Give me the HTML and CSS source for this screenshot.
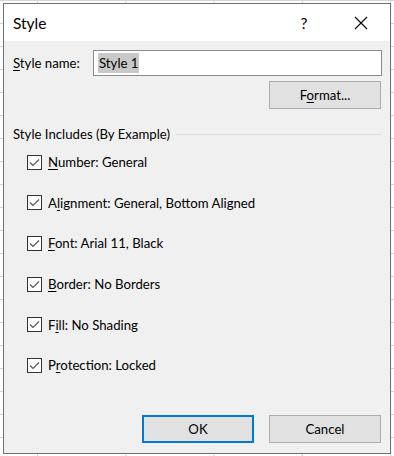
FILE: index.html
```html
<!DOCTYPE html>
<html>
<head>
<meta charset="utf-8">
<link rel="stylesheet" href="styles.css">
</head>
<body>
<div class="dialog">
  <div class="titlebar">
    <span class="title">Style</span>
    <span class="help">?</span>
    <span class="close">
      <svg width="14" height="14" viewBox="0 0 14 14"><path d="M1 1 L13 13 M13 1 L1 13" stroke="#000" stroke-width="1.1" fill="none"/></svg>
    </span>
  </div>
  <div class="body">
    <div class="name-row">
      <label class="label"><u>S</u>tyle name:</label>
      <div class="input"><span class="sel">Style 1</span></div>
    </div>
    <div class="format-row">
      <button class="btn">F<u>o</u>rmat...</button>
    </div>
    <div class="group-head">
      <span>Style Includes (By Example)</span>
      <span class="line"></span>
    </div>
    <div class="checks">
      <div class="check"><span class="box"><svg width="13" height="13" viewBox="0 0 13 13"><path d="M2 6.5 L5 9.5 L11 3.5" stroke="#555" stroke-width="1.2" fill="none"/></svg></span><span><u>N</u>umber: General</span></div>
      <div class="check"><span class="box"><svg width="13" height="13" viewBox="0 0 13 13"><path d="M2 6.5 L5 9.5 L11 3.5" stroke="#555" stroke-width="1.2" fill="none"/></svg></span><span>A<u>l</u>ignment: General, Bottom Aligned</span></div>
      <div class="check"><span class="box"><svg width="13" height="13" viewBox="0 0 13 13"><path d="M2 6.5 L5 9.5 L11 3.5" stroke="#555" stroke-width="1.2" fill="none"/></svg></span><span><u>F</u>ont: Arial 11, Black</span></div>
      <div class="check"><span class="box"><svg width="13" height="13" viewBox="0 0 13 13"><path d="M2 6.5 L5 9.5 L11 3.5" stroke="#555" stroke-width="1.2" fill="none"/></svg></span><span><u>B</u>order: No Borders</span></div>
      <div class="check"><span class="box"><svg width="13" height="13" viewBox="0 0 13 13"><path d="M2 6.5 L5 9.5 L11 3.5" stroke="#555" stroke-width="1.2" fill="none"/></svg></span><span>F<u>i</u>ll: No Shading</span></div>
      <div class="check"><span class="box"><svg width="13" height="13" viewBox="0 0 13 13"><path d="M2 6.5 L5 9.5 L11 3.5" stroke="#555" stroke-width="1.2" fill="none"/></svg></span><span>P<u>r</u>otection: Locked</span></div>
    </div>
    <div class="buttons">
      <button class="btn ok">OK</button>
      <button class="btn">Cancel</button>
    </div>
  </div>
</div>
</body>
</html>
```
FILE: styles.css
```css
html, body {
  margin: 0;
  padding: 0;
}
body {
  width: 394px;
  height: 456px;
  overflow: hidden;
  background-color: #fff;
  background-image:
    linear-gradient(to right, #d4d4d4 1px, transparent 1px),
    linear-gradient(to bottom, #d4d4d4 1px, transparent 1px);
  background-size: 88.3px 23px;
  background-position: 37px 0, 0 0;
  font-family: "Lato", "Noto Sans", sans-serif;
  font-size: 13.2px;
  color: #000;
  padding: 3px 0 0 3px;
  box-sizing: border-box;
}
.dialog {
  width: 388px;
  height: 451px;
  box-sizing: border-box;
  border: 1px solid #707070;
  background: #f0f0f0;
  display: flex;
  flex-direction: column;
}
.titlebar {
  height: 37px;
  background: #fff;
  display: flex;
  align-items: center;
  padding-left: 9px;
  flex-shrink: 0;
}
.title {
  font-size: 15.5px;
  flex: 1;
}
.help {
  width: 46px;
  margin-right: 11px;
  text-align: center;
  font-size: 15.5px;
}
.close {
  width: 46px;
  margin-right: 6px;
  display: flex;
  justify-content: center;
}
.body {
  flex: 1;
  display: flex;
  flex-direction: column;
  padding: 9px 8px 10px 9px;
}
.name-row {
  display: flex;
  align-items: center;
  height: 26px;
}
.label {
  width: 80px;
}
.input {
  flex: 1;
  height: 26px;
  box-sizing: border-box;
  border: 1px solid #8a8a8a;
  background: #fff;
  display: flex;
  align-items: center;
  padding-left: 4px;
}
.sel {
  background: #c8c8c8;
  padding: 2px 1px 2px;
}
.format-row {
  display: flex;
  justify-content: flex-end;
  margin-top: 5px;
  padding-right: 1px;
}
.btn {
  width: 112px;
  height: 28px;
  box-sizing: border-box;
  border: 1px solid #adadad;
  background: #e1e1e1;
  font-family: inherit;
  font-size: 13.2px;
  color: #000;
  padding: 0;
}
.btn.ok {
  border: 2px solid #0078d7;
}
.group-head {
  display: flex;
  align-items: center;
  height: 20px;
  margin-top: 15px;
  gap: 6px;
}
.line {
  flex: 1;
  height: 1px;
  background: #dcdcdc;
  margin-right: 1px;
}
.checks {
  display: flex;
  flex-direction: column;
  gap: 20.7px;
  margin-top: 8px;
  padding-left: 14px;
}
.check {
  display: flex;
  align-items: center;
  height: 20px;
  gap: 6px;
}
.box {
  width: 15px;
  height: 15px;
  box-sizing: border-box;
  border: 1px solid #333;
  background: #fff;
  display: flex;
  align-items: center;
  justify-content: center;
}
.box svg {
  display: block;
}
.buttons {
  margin-top: auto;
  display: flex;
  justify-content: flex-end;
  gap: 15px;
  padding-right: 1px;
}
u {
  text-underline-offset: 2px;
}
```
